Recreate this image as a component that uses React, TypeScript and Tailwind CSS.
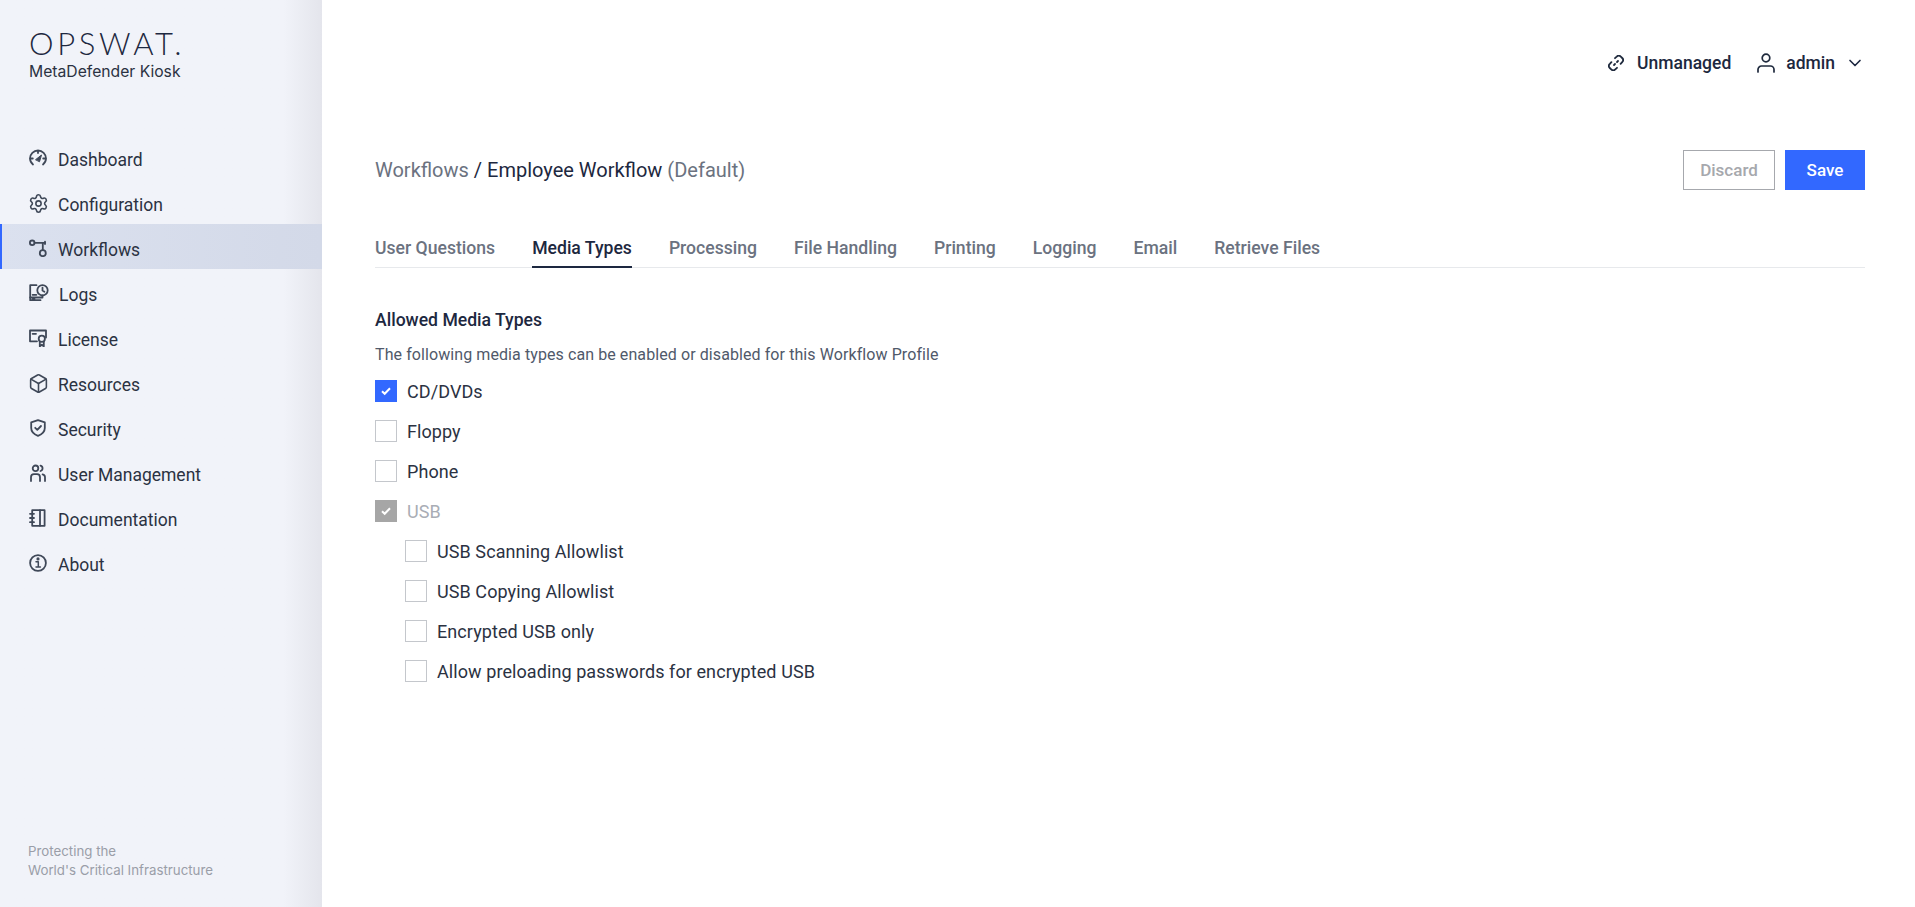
import React from "react";
import { ChevronDown, Settings, Box } from "lucide-react";

const C = "#3f4858";
const ic = { width: 18, height: 18, viewBox: "0 0 18 18", fill: "none", stroke: C, strokeWidth: 1.8, strokeLinecap: "round" as const, strokeLinejoin: "round" as const };

const Gauge = () => (
  <svg {...ic}><path d="M4 15.5A8 8 0 0 1 1 9.5 8 8 0 0 1 9 1.5a8 8 0 0 1 8 8 8 8 0 0 1-3 6" /><path d="M1.5 9.5H3.8M14.2 9.5H16.5M9 2v2" /><path d="M6.8 10.5 12.5 6 10.6 12.4Z" fill={C} strokeWidth="1" /></svg>
);
const Flow = () => (
  <svg {...ic}><circle cx="3.2" cy="3.8" r="2.3" /><circle cx="13.8" cy="14.2" r="3" /><path d="M5.5 3.8H16M13.8 3.8V11.2" /><path d="M16 2.6V5" /></svg>
);
const LogsIcon = () => (
  <svg {...ic} width={20} height={18} viewBox="0 0 20 18"><path d="M7.5 1.2H1.2V16.2H11.5" /><path d="M1.2 13.5H13.5V11.5" /><circle cx="13.5" cy="6.3" r="5.2" /><path d="M13.5 3.6V6.6L15.4 7.8" /><path d="M3.6 10.8H7.4" /><path d="M3.6 15H5.6" /></svg>
);
const LicenseIcon = () => (
  <svg {...ic}><path d="M8 12.3H1V1.5H17V8.5" /><path d="M3.6 4.8H7" /><circle cx="12.8" cy="9.8" r="3.1" /><path d="M10.8 12.6V17.4L12.8 15.8 14.8 17.4V12.6" /></svg>
);
const ShieldIcon = () => (
  <svg {...ic}><path d="M9 1.2 15.8 3.4V9c0 4-3 6.4-6.8 7.8C5.2 15.4 2.2 13 2.2 9V3.4Z" /><path d="M6.2 8.8 8.3 10.8 12 7" /></svg>
);
const UsersIcon = () => (
  <svg {...ic}><circle cx="6.5" cy="4.3" r="2.8" /><path d="M2 17V13.2a3 3 0 0 1 3-3h3a3 3 0 0 1 3 3V17" /><path d="M11.5 1.6a2.8 2.8 0 0 1 0 5.4" /><path d="M13.6 10.4a3 3 0 0 1 2.4 2.9V17" /></svg>
);
const DocIcon = () => (
  <svg {...ic} width={17} height={18} viewBox="0 0 17 18"><path d="M3.2 1.2H15.6V16.8H3.2Z" /><path d="M11 1.2V16.8" /><path d="M1 4.8H5M1 9H5M1 13.2H5" /></svg>
);
const InfoIcon = () => (
  <svg {...ic}><circle cx="9" cy="9" r="7.9" /><path d="M7 7.7H9.3V12.8M7 13H11.4" strokeWidth="1.5" /><circle cx="9" cy="4.9" r=".7" fill={C} /></svg>
);
const LinkOff = () => (
  <svg width="16" height="16" viewBox="0 0 16 16" fill="none" stroke="#1f2a3d" strokeWidth="1.8" strokeLinecap="round" strokeLinejoin="round"><path d="M7 3.2 8.7 1.6a2.9 2.9 0 0 1 4.1 0l1.4 1.4a2.9 2.9 0 0 1 0 4.1L12.6 8.8" /><path d="M9 12.8 7.3 14.4a2.9 2.9 0 0 1-4.1 0L1.8 13a2.9 2.9 0 0 1 0-4.1L3.4 7.2" /><path d="M6 10 7 9M9 7 10 6" /></svg>
);
const UserIcon = () => (
  <svg width="18" height="20" viewBox="0 0 18 20" fill="none" stroke="#1f2a3d" strokeWidth="1.7" strokeLinecap="round"><circle cx="9" cy="5" r="3.8" /><path d="M1 19v-2.5A3.5 3.5 0 0 1 4.5 13h9a3.5 3.5 0 0 1 3.5 3.5V19" /></svg>
);

const nav = [
  { label: "Dashboard", icon: <Gauge /> },
  { label: "Configuration", icon: <Settings size={21} strokeWidth={1.8} color={C} className="-m-[1.5px]" /> },
  { label: "Workflows", icon: <Flow />, active: true },
  { label: "Logs", icon: <LogsIcon />, wide: true },
  { label: "License", icon: <LicenseIcon /> },
  { label: "Resources", icon: <Box size={21} strokeWidth={1.8} color={C} className="-m-[1.5px]" /> },
  { label: "Security", icon: <ShieldIcon /> },
  { label: "User Management", icon: <UsersIcon /> },
  { label: "Documentation", icon: <DocIcon /> },
  { label: "About", icon: <InfoIcon /> },
];

const tabs = ["User Questions", "Media Types", "Processing", "File Handling", "Printing", "Logging", "Email", "Retrieve Files"];

function Check({ state, label, indent }: { state?: "on" | "disabled"; label: string; indent?: boolean }) {
  const box = state === "on" ? "bg-[#3268ff] border-[#3268ff]" : state === "disabled" ? "bg-[#a6a6a6] border-[#a6a6a6]" : "bg-white border-[#c4c7cc]";
  return (
    <div className={`flex h-10 items-center gap-[10px] ${indent ? "pl-[30px]" : ""}`}>
      <span className={`flex h-[22px] w-[22px] items-center justify-center border ${box}`}>
        {state && (
          <svg width="12" height="12" viewBox="0 0 12 12" fill="none" stroke="#fff" strokeWidth="2"><path d="M2 6.2 4.7 8.8 10 3.2" /></svg>
        )}
      </span>
      <span className={`pt-[2px] text-[18px] leading-6 tracking-[0.08px] ${state === "disabled" ? "text-[#a9adb5]" : "text-[#2b3242]"}`}>{label}</span>
    </div>
  );
}

export default function App() {
  return (
    <div className="flex h-[907px] w-[1915px] overflow-hidden bg-white font-['Roboto',sans-serif] text-[#1d2840]">
      <aside className="flex w-[322px] shrink-0 flex-col bg-gradient-to-r from-[#f1f3f9] from-[88%] to-[#e4e5ec]">
        <div className="pl-[29px] pt-[24px]">
          <div className="font-['Lato',sans-serif] text-[31px] font-light leading-[38px] tracking-[3.7px] text-[#1d2840]">OPSWAT.</div>
          <div className="font-['Inter',sans-serif] text-[15.7px] leading-[20px] text-[#2b3242]">MetaDefender Kiosk</div>
        </div>
        <nav className="mt-[52px] flex flex-col">
          {nav.map((n) => (
            <div key={n.label} className={`flex h-[45px] items-center border-l-2 pl-[27px] ${n.active ? "border-[#3268ff] bg-gradient-to-r from-[#dbe1ef] to-[#d3d9e8]" : "border-transparent"}`}>
              <span className={`mt-[3px] flex items-center ${n.wide ? "w-[30px]" : "w-[29px]"}`}>{n.icon}</span>
              <span className="mt-[8px] text-[17.5px] text-[#2b3242]">{n.label}</span>
            </div>
          ))}
        </nav>
        <div className="mt-auto pb-[27px] pl-[28px] font-['Inter',sans-serif] text-[13.3px] leading-[19px] text-[#9a9ea8]">
          <div>Protecting the</div>
          <div>World's Critical Infrastructure</div>
        </div>
      </aside>
      <main className="flex min-w-0 flex-1 flex-col pl-[53px] pr-[50px]">
        <header className="flex h-[150px] items-center justify-end pb-[24px]">
          <div className="flex items-center gap-[13px] text-[17.5px] font-medium text-[#1d2840]">
            <LinkOff />
            <span>Unmanaged</span>
          </div>
          <div className="ml-[26px] flex items-center gap-[11px] text-[17.5px] font-medium text-[#1d2840]">
            <UserIcon />
            <span>admin</span>
            <ChevronDown size={20} strokeWidth={2} className="-ml-[1px]" />
          </div>
        </header>
        <div className="flex h-[40px] items-center justify-between">
          <div className="text-[20px] text-[#1d2840]">
            <span className="text-[#6b7280]">Workflows</span> / Employee Workflow <span className="text-[#6b7280]">(Default)</span>
          </div>
          <div className="flex gap-[10px]">
            <button className="h-10 w-[92px] border border-[#a6a8ad] pt-[1px] text-[17px] font-medium text-[#a6a8ad]">Discard</button>
            <button className="h-10 w-[80px] bg-[#3268ff] pt-[1px] text-[17px] font-medium text-white">Save</button>
          </div>
        </div>
        <div className="mt-[38px] flex h-[40px] gap-[37px] border-b border-[#e7e9ec]">
          {tabs.map((t) => (
            <div key={t} className={`-mb-px flex items-center border-b-2 pt-[3px] text-[17.6px] font-medium ${t === "Media Types" ? "border-[#1d2840] text-[#1d2840]" : "border-transparent text-[#6b7280]"}`}>{t}</div>
          ))}
        </div>
        <h2 className="mt-[40px] text-[17.6px] font-medium leading-[24px] text-[#1d2840]">Allowed Media Types</h2>
        <p className="mt-[13px] text-[16px] leading-[20px] tracking-[0.086px] text-[#50596a]">The following media types can be enabled or disabled for this Workflow Profile</p>
        <div className="mt-[6px] flex flex-col">
          <Check state="on" label="CD/DVDs" />
          <Check label="Floppy" />
          <Check label="Phone" />
          <Check state="disabled" label="USB" />
          <Check indent label="USB Scanning Allowlist" />
          <Check indent label="USB Copying Allowlist" />
          <Check indent label="Encrypted USB only" />
          <Check indent label="Allow preloading passwords for encrypted USB" />
        </div>
      </main>
    </div>
  );
}
